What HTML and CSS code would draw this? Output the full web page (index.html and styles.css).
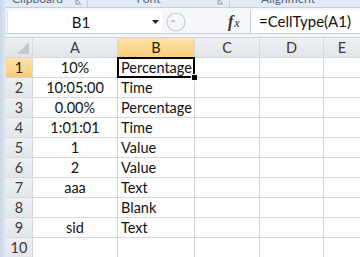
FILE: index.html
```html
<!DOCTYPE html>
<html>
<head>
<meta charset="utf-8">
<link rel="stylesheet" href="styles.css">
</head>
<body>
<div class="app">
  <div class="edge"></div>
  <div class="main">
    <div class="ribbon">
      <div class="grp g1"><span class="lbl">Clipboard</span><svg class="launch" width="7" height="5" viewBox="0 0 7 5"><path d="M1 0V4H6" fill="none" stroke="#8a96a6" stroke-width="1"/><path d="M2 0L5 3" stroke="#8a96a6" stroke-width="1"/></svg></div>
      <div class="grp g2"><span class="lbl">Font</span><svg class="launch" width="7" height="5" viewBox="0 0 7 5"><path d="M1 0V4H6" fill="none" stroke="#8a96a6" stroke-width="1"/><path d="M2 0L5 3" stroke="#8a96a6" stroke-width="1"/></svg></div>
      <div class="grp g3"><span class="lbl">Alignment</span></div>
    </div>
    <div class="fbar">
      <div class="namebox"><span class="nbtext">B1</span><svg class="arrow" width="7" height="4" viewBox="0 0 7 4"><path d="M0 0H7L3.5 4Z" fill="#222"/></svg></div>
      <div class="grip"><svg width="20" height="22" viewBox="0 0 20 22"><circle cx="10" cy="11" r="9" fill="none" stroke="#c9ced6" stroke-width="1.2"/><path d="M5 10H9" stroke="#c2c7cf" stroke-width="2"/></svg></div>
      <div class="fx"><span class="f">f</span><span class="x">x</span></div>
      <div class="formula">=CellType(A1)</div>
    </div>
    <div class="gap"></div>
    <div class="grid">
      <div class="corner"><svg width="12" height="12" viewBox="0 0 12 12"><path d="M12 0V12H0Z" fill="#c5c8cd"/></svg></div>
      <div class="ch">A</div><div class="ch sel">B</div><div class="ch">C</div><div class="ch">D</div><div class="ch">E</div>

      <div class="rh sel">1</div><div class="c ca">10%</div><div class="c cb active">Percentage</div><div class="c"></div><div class="c"></div><div class="c"></div>
      <div class="rh">2</div><div class="c ca">10:05:00</div><div class="c cb">Time</div><div class="c"></div><div class="c"></div><div class="c"></div>
      <div class="rh">3</div><div class="c ca">0.00%</div><div class="c cb">Percentage</div><div class="c"></div><div class="c"></div><div class="c"></div>
      <div class="rh">4</div><div class="c ca">1:01:01</div><div class="c cb">Time</div><div class="c"></div><div class="c"></div><div class="c"></div>
      <div class="rh">5</div><div class="c ca">1</div><div class="c cb">Value</div><div class="c"></div><div class="c"></div><div class="c"></div>
      <div class="rh">6</div><div class="c ca">2</div><div class="c cb">Value</div><div class="c"></div><div class="c"></div><div class="c"></div>
      <div class="rh">7</div><div class="c ca">aaa</div><div class="c cb">Text</div><div class="c"></div><div class="c"></div><div class="c"></div>
      <div class="rh">8</div><div class="c ca"></div><div class="c cb">Blank</div><div class="c"></div><div class="c"></div><div class="c"></div>
      <div class="rh">9</div><div class="c ca">sid</div><div class="c cb">Text</div><div class="c"></div><div class="c"></div><div class="c"></div>
      <div class="rh">10</div><div class="c ca"></div><div class="c cb"></div><div class="c"></div><div class="c"></div><div class="c"></div>
    </div>
  </div>
</div>
</body>
</html>
```
FILE: styles.css
```css
html, body {
  margin: 0;
  padding: 0;
  width: 360px;
  height: 257px;
  overflow: hidden;
  background: #ffffff;
}
.app {
  display: flex;
  width: 360px;
  height: 257px;
  overflow: hidden;
  font-family: "Lato", "Liberation Sans", sans-serif;
  font-size: 14.5px;
  color: #111;
}
.edge {
  width: 6px;
  flex: none;
  background: linear-gradient(to right, #c9d7ea, #dfe8f4);
}
.main {
  flex: 1;
  display: flex;
  flex-direction: column;
  min-width: 0;
  overflow: hidden;
}
.ribbon {
  flex: none;
  height: 7px;
  border-bottom: 1px solid #c4cfdd;
  background: #e3ebf6;
  display: flex;
  overflow: hidden;
  align-items: flex-end;
}
.grp {
  height: 7px;
  display: flex;
  align-items: flex-end;
  justify-content: center;
  position: relative;
  border-right: 1px solid #c2cddc;
  box-sizing: border-box;
}
.g1 { width: 82px; }
.g2 { width: 142px; }
.g3 { flex: 1; border-right: none; }
.lbl {
  display: block;
  font-size: 12px;
  line-height: 13px;
  height: 13px;
  flex: none;
  margin-bottom: 2px;
  color: #56647a;
  white-space: nowrap;
}
.g1 .lbl { margin-right: 18px; }
.g2 .lbl { margin-right: 20px; }
.g3 .lbl { margin-right: 14px; }
.launch {
  position: absolute;
  right: 5px;
  top: 0;
}
.fbar {
  flex: none;
  display: flex;
  align-items: flex-start;
  background: #f5f7fa;
  border-bottom: 1px solid #c8ced8;
  box-sizing: border-box;
  height: 26px;
  padding-top: 2px;
}
.namebox {
  width: 155px;
  margin-left: 1px;
  height: 23px;
  background: #fff;
  display: flex;
  align-items: center;
  box-sizing: border-box;
  border-left: 1px solid #e0e4ea;
}
.nbtext {
  flex: 1;
  text-align: center;
  font-size: 15px;
  padding-left: 4px;
}
.arrow {
  margin-right: 3px;
  margin-left: 2px;
}
.grip {
  width: 66px;
  height: 23px;
  display: flex;
  align-items: center;
  padding-left: 4px;
  box-sizing: border-box;
}
.fx {
  width: 22px;
  height: 23px;
  display: flex;
  align-items: center;
  font-family: "Liberation Serif", serif;
  font-style: italic;
  color: #333;
}
.fx .f { font-size: 16px; font-weight: bold; }
.fx .x { font-size: 12px; margin-top: 4px; margin-left: 1px; }
.formula {
  flex: 1;
  height: 23px;
  background: #fff;
  border-left: 1px solid #c8ced8;
  padding-left: 8px;
  line-height: 23px;
  font-size: 15px;
  white-space: nowrap;
}
.gap {
  flex: none;
  height: 3px;
  background: #f3f5f8;
}
.grid {
  flex: none;
  display: grid;
  grid-template-columns: 26px 84px 76px 64px 63px 1fr;
  grid-template-rows: repeat(11, 19px) 10px;
  gap: 1px;
  background: #d6d8dc;
  border-top: 1px solid #d0d4da;
  align-content: start;
}
.corner {
  background: linear-gradient(#eceef1, #e1e4e8);
  display: flex;
  align-items: flex-end;
  justify-content: flex-end;
  padding: 0 3px 3px 0;
}
.ch, .rh {
  background: linear-gradient(#eef0f3, #e2e5e9);
  color: #3a3a3a;
  display: flex;
  align-items: center;
  justify-content: center;
  font-size: 14.5px;
}
.ch.sel, .rh.sel {
  background: linear-gradient(#fbe3a8, #f6cd77);
  color: #222;
}
.c {
  background: #fff;
  line-height: 19px;
  white-space: nowrap;
  overflow: visible;
}
.ca { text-align: center; }
.cb { padding-left: 3px; }
.active {
  position: relative;
}
.active::before {
  content: "";
  position: absolute;
  left: -1px;
  top: -1px;
  right: -1px;
  bottom: -1px;
  border: 2px solid #000;
}
.active::after {
  content: "";
  position: absolute;
  right: -4px;
  bottom: -4px;
  width: 5px;
  height: 5px;
  background: #000;
  border: 1px solid #fff;
}
```
